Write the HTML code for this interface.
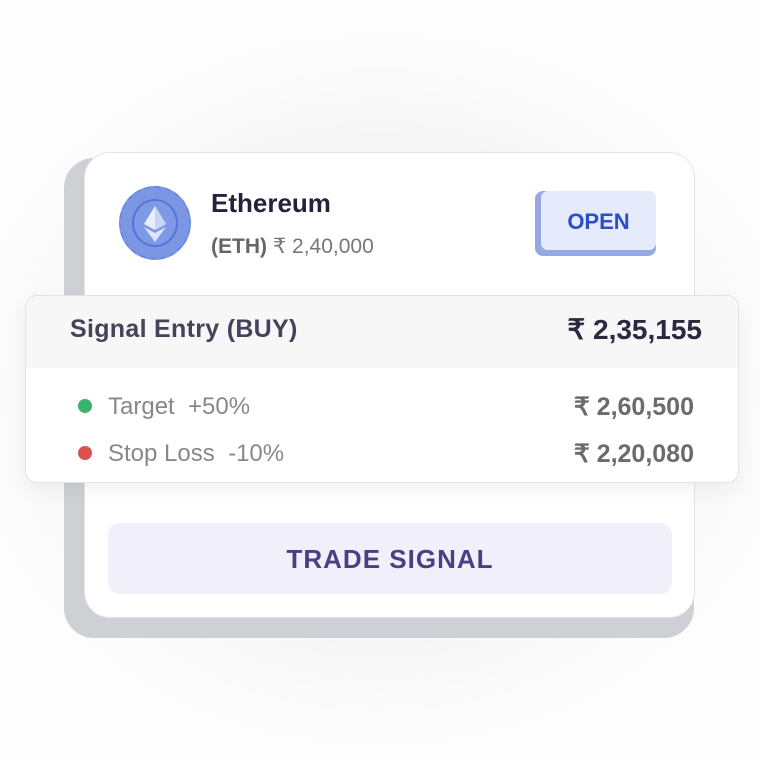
<!DOCTYPE html>
<html><head><meta charset="utf-8"><style>
*{margin:0;padding:0;box-sizing:border-box}
body{width:760px;height:760px;overflow:hidden;background:radial-gradient(ellipse 420px 360px at 380px 390px,#eeeef1 0%,#f3f3f5 55%,#fdfdfd 100%);font-family:"Liberation Sans",sans-serif;position:relative}
.back{position:absolute;left:64px;top:158px;width:630px;height:480px;border-radius:30px;background:#cfd0d6}
.card{position:absolute;left:84px;top:152px;width:611px;height:466px;border-radius:26px;background:#fff;border:1px solid #e4e5ea}
.coin{position:absolute;left:119px;top:186px;width:72px;height:74px;border-radius:50%;background:#7a96e4;border:2px dashed #6a88dc}
.coin .in{position:absolute;left:11px;top:11px;width:46px;height:48px;border-radius:50%;border:2px solid #5676d4;background:#7e9ae6}
.name{position:absolute;left:211px;top:188px;font-size:26px;font-weight:bold;color:#23223a}
.sub{position:absolute;left:211px;top:234px;font-size:21px;color:#777}
.sub b{color:#666}
.open{position:absolute;left:535px;top:191px;width:121px;height:65px;border-radius:8px;background:#95a8e4}
.open div{position:absolute;left:6px;top:0;width:115px;height:59px;border-radius:7px;background:#e6ebfb;color:#2a4ec9;font-weight:bold;font-size:22px;text-align:center;line-height:62px}
.panel{position:absolute;left:25px;top:295px;width:714px;height:188px;border-radius:12px;background:#fff;border:1px solid #e2e3e6;overflow:hidden;box-shadow:0 8px 20px rgba(0,0,0,.05)}
.ph{height:72px;background:#f7f7f8;position:relative}
.ph .l{position:absolute;left:44px;top:19px;font-size:25px;font-weight:bold;color:#44435a;letter-spacing:0.3px}
.ph .r{position:absolute;right:36px;top:17px;font-size:28px;font-weight:bold;color:#2a2940}
.row{position:absolute;left:52px;font-size:24px;color:#888}
.row .d{display:inline-block;width:14px;height:14px;border-radius:50%;margin-right:16px;vertical-align:1px}
.val{position:absolute;right:44px;font-size:25px;font-weight:bold;color:#6b6b6b}
.btn{position:absolute;left:108px;top:523px;width:564px;height:71px;border-radius:12px;background:#f1f0fa;color:#4a3f82;font-weight:bold;font-size:26px;text-align:center;line-height:72px;letter-spacing:1px}
</style></head><body>
<div class="back"></div>
<div class="card"></div>
<div class="coin"><div class="in">
<svg width="46" height="48" viewBox="0 0 46 48" style="position:absolute;left:-2px;top:-2px"><polygon points="23,7 34,25 23,31 12,25" fill="#e9eefc"/><polygon points="23,7 34,25 23,31" fill="#c9d5f5"/><polygon points="23,34 34,28 23,43 12,28" fill="#dde5fa"/></svg>
</div></div>
<div class="name">Ethereum</div>
<div class="sub"><b>(ETH)</b> ₹ 2,40,000</div>
<div class="open"><div>OPEN</div></div>
<div class="panel">
<div class="ph"><span class="l">Signal Entry (BUY)</span><span class="r">₹ 2,35,155</span></div>
<div class="row" style="top:97px"><span class="d" style="background:#3bb26e"></span>Target &nbsp;+50%</div>
<div class="val" style="top:96px">₹ 2,60,500</div>
<div class="row" style="top:144px"><span class="d" style="background:#dd5050"></span>Stop Loss &nbsp;-10%</div>
<div class="val" style="top:143px">₹ 2,20,080</div>
</div>
<div class="btn">TRADE SIGNAL</div>
</body></html>
